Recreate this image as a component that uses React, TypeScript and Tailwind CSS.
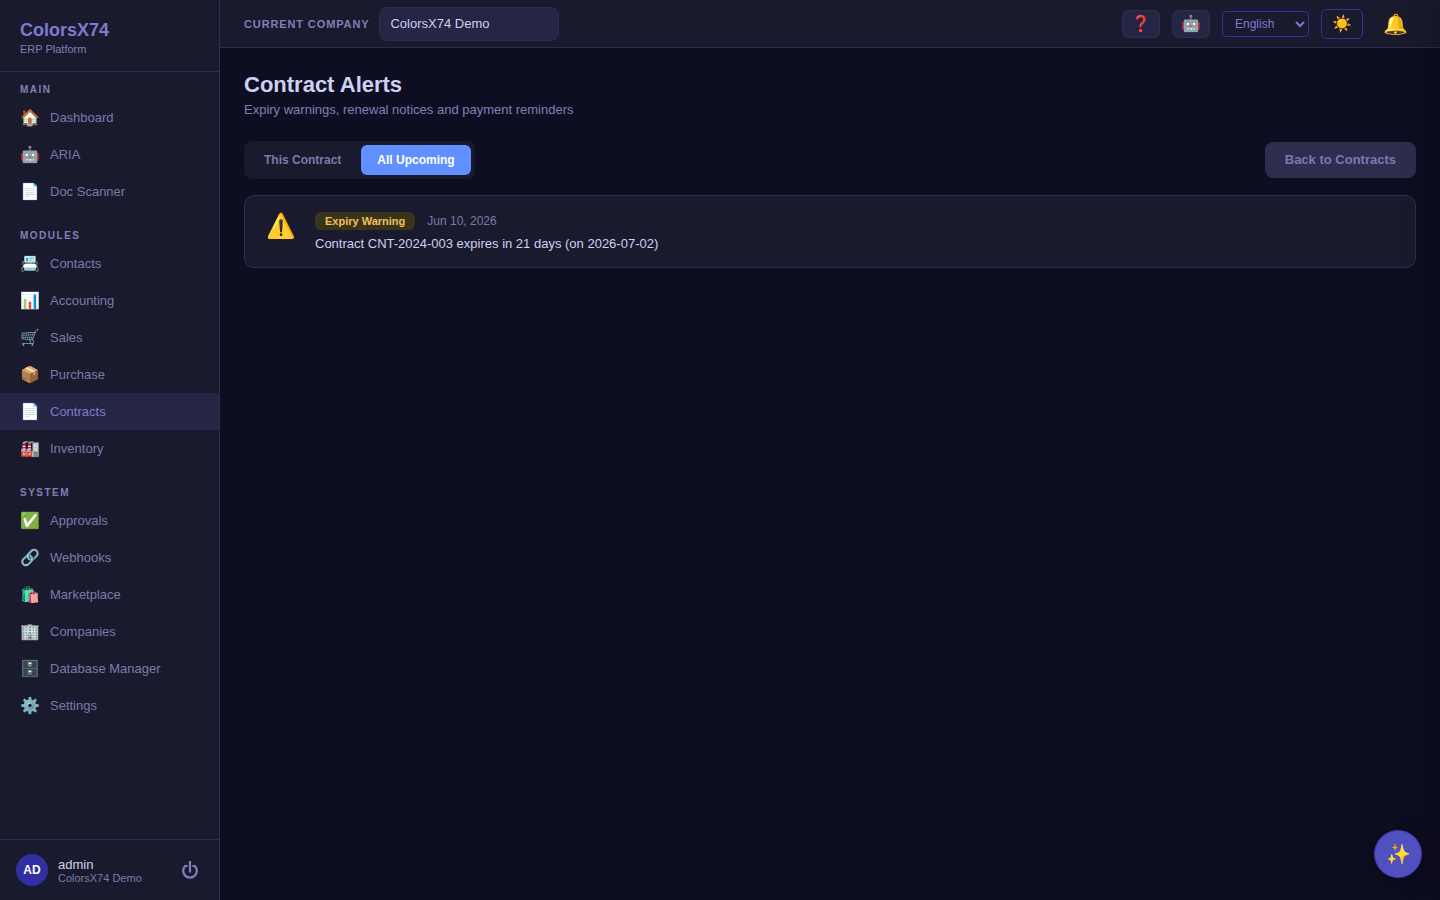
import React, { useState } from 'react';

interface NavItem {
  icon: string;
  label: string;
}

interface NavSection {
  title: string;
  items: NavItem[];
}

const sections: NavSection[] = [
  {
    title: 'MAIN',
    items: [
      { icon: '🏠', label: 'Dashboard' },
      { icon: '🤖', label: 'ARIA' },
      { icon: '📄', label: 'Doc Scanner' },
    ],
  },
  {
    title: 'MODULES',
    items: [
      { icon: '📇', label: 'Contacts' },
      { icon: '📊', label: 'Accounting' },
      { icon: '🛒', label: 'Sales' },
      { icon: '📦', label: 'Purchase' },
      { icon: '📄', label: 'Contracts' },
      { icon: '🏭', label: 'Inventory' },
    ],
  },
  {
    title: 'SYSTEM',
    items: [
      { icon: '✅', label: 'Approvals' },
      { icon: '🔗', label: 'Webhooks' },
      { icon: '🛍️', label: 'Marketplace' },
      { icon: '🏢', label: 'Companies' },
      { icon: '🗄️', label: 'Database Manager' },
      { icon: '⚙️', label: 'Settings' },
    ],
  },
];

const tabs = ['This Contract', 'All Upcoming'];

const PowerIcon: React.FC = () => (
  <svg width="18" height="20" viewBox="0 0 18 20" fill="none" stroke="currentColor" strokeWidth="2.2">
    <path d="M9 1v11.5" />
    <path d="M6.6 6H4.2A6.8 6.8 0 1 0 13.8 6H11.4" />
  </svg>
);

const Sidebar: React.FC = () => {
  return (
    <aside className="flex w-[220px] shrink-0 flex-col border-r border-[#2d2d4e] bg-[#1a1a2e]">
      <div className="border-b border-[#2d2d4e] px-5 pt-5 pb-[15px]">
        <div className="text-lg leading-5 font-bold text-[#7c7ccf]">ColorsX74</div>
        <div className="pt-0.5 text-[11px] leading-[14px] text-[#8080b8]">ERP Platform</div>
      </div>

      <nav className="flex-1 overflow-hidden">
        {sections.map((section) => (
          <div key={section.title} className="mb-2">
            <h2 className="px-5 pt-3 pb-1 text-[10px] leading-[11px] font-bold tracking-[1.5px] text-[#8080b8]">
              {section.title}
            </h2>
            {section.items.map((item) => (
              <a
                key={item.label}
                href="#"
                className={`flex h-[37px] items-center gap-2.5 px-5 text-[13px] ${
                  item.label === 'Contracts' ? 'bg-[#252545] text-[#7c7ccf]' : 'text-[#7a7aaa]'
                }`}
              >
                <span className="w-5 text-center text-base leading-5">{item.icon}</span>
                <span>{item.label}</span>
              </a>
            ))}
          </div>
        ))}
      </nav>

      <div className="flex items-center gap-2.5 border-t border-[#2d2d4e] px-4 py-3.5">
        <div className="flex size-8 items-center justify-center rounded-full bg-[#3030a0] text-xs font-bold text-white">
          AD
        </div>
        <div className="flex-1 pt-0.5">
          <div className="text-[13px] leading-[15px] text-[#d0d0f0]">admin</div>
          <div className="text-[11px] leading-[13px] text-[#7a7aaa]">ColorsX74 Demo</div>
        </div>
        <button type="button" aria-label="Log out" className="px-1 text-[#8080c0]">
          <PowerIcon />
        </button>
      </div>
    </aside>
  );
};

const TopBar: React.FC = () => {
  return (
    <header className="flex h-12 items-center justify-between border-b border-[#2d2d4e] bg-[#1a1a2e] px-6">
      <div className="flex items-center gap-2.5">
        <label
          htmlFor="company"
          className="pt-px text-[11px] leading-[13px] font-bold tracking-[0.08em] text-[#8080b8]"
        >
          CURRENT COMPANY
        </label>
        <select
          id="company"
          className="h-[34px] w-[180px] appearance-none rounded-lg border border-[#2d2d4e] bg-[#252545] px-2.5 text-[13px] text-[#d0d0f0]"
        >
          <option>ColorsX74 Demo</option>
        </select>
      </div>

      <div className="flex items-center gap-3">
        <button
          type="button"
          aria-label="Help"
          className="flex h-7 w-[38px] items-center justify-center rounded-md border border-[#2d2d4e] bg-[#252545] text-base"
        >
          ❓
        </button>
        <button
          type="button"
          aria-label="Assistant"
          className="flex h-7 w-[38px] items-center justify-center rounded-md border border-[#2d2d4e] bg-[#252545] text-base"
        >
          🤖
        </button>
        <select
          aria-label="Language"
          className="h-[26px] w-[87px] rounded-sm border border-[#3030a0] bg-[#1a1a2e] px-2 text-xs text-[#7c7ccf]"
        >
          <option>English</option>
        </select>
        <button
          type="button"
          aria-label="Toggle theme"
          className="flex h-[30px] w-[42px] items-center justify-center rounded-md border border-[#3030a0] text-base"
        >
          ☀️
        </button>
        <button type="button" aria-label="Notifications" className="px-2 text-xl">
          🔔
        </button>
      </div>
    </header>
  );
};

const AlertCard: React.FC = () => {
  return (
    <article className="mt-4 flex items-start gap-[18px] rounded-[10px] border border-[#2d2d4e] bg-[#1a1a2e] px-5 py-4">
      <span className="w-8 text-center text-2xl leading-7">⚠️</span>
      <div>
        <div className="flex items-center gap-3">
          <span className="rounded-md bg-[#38351a] px-2.5 text-[11px] leading-[18px] font-bold text-[#f0c060]">
            Expiry Warning
          </span>
          <time dateTime="2026-06-10" className="text-xs leading-[18px] text-[#7a7aaa]">
            Jun 10, 2026
          </time>
        </div>
        <p className="mt-1.5 text-[13px] leading-[15px] text-[#d0d0f0]">
          Contract CNT-2024-003 expires in 21 days (on 2026-07-02)
        </p>
      </div>
    </article>
  );
};

const App: React.FC = () => {
  const [activeTab, setActiveTab] = useState('All Upcoming');

  return (
    <div className="flex min-h-screen overflow-hidden bg-[#0e0e22] font-['Liberation_Sans',Arial,sans-serif]">
      <Sidebar />
      <div className="min-w-0 flex-1">
        <TopBar />
        <main className="p-6">
          <h1 className="text-[22px] leading-[26px] font-bold text-[#d0d0f0]">Contract Alerts</h1>
          <p className="mt-1 text-[13px] leading-4 text-[#8080b8]">
            Expiry warnings, renewal notices and payment reminders
          </p>

          <div className="mt-[23px] flex items-center justify-between">
            <div className="flex gap-1 rounded-lg bg-[#1a1a2e] p-1">
              {tabs.map((tab) => (
                <button
                  key={tab}
                  type="button"
                  onClick={() => setActiveTab(tab)}
                  className={`h-[30px] rounded-md px-4 text-xs font-bold ${
                    tab === activeTab ? 'bg-[#6090ff] text-white' : 'text-[#7a7aaa]'
                  }`}
                >
                  {tab}
                </button>
              ))}
            </div>
            <button
              type="button"
              className="h-9 rounded-lg bg-[#2d2d4e] px-5 text-[13px] font-bold text-[#7a7ab0]"
            >
              Back to Contracts
            </button>
          </div>

          <AlertCard />
        </main>
      </div>

      {/* closed drawer, parked off screen: only its shadow shows */}
      <div className="fixed inset-y-0 left-full w-96 shadow-[-4px_0_32px_rgba(0,0,0,0.3)]" />

      <button
        type="button"
        aria-label="Open assistant"
        className="fixed right-[18px] bottom-[22px] flex size-12 items-center justify-center rounded-full border border-[#3d3db0] bg-[#5050c0] text-xl shadow-[0_4px_20px_rgba(0,0,0,0.4)]"
      >
        ✨
      </button>
    </div>
  );
};

export default App;
